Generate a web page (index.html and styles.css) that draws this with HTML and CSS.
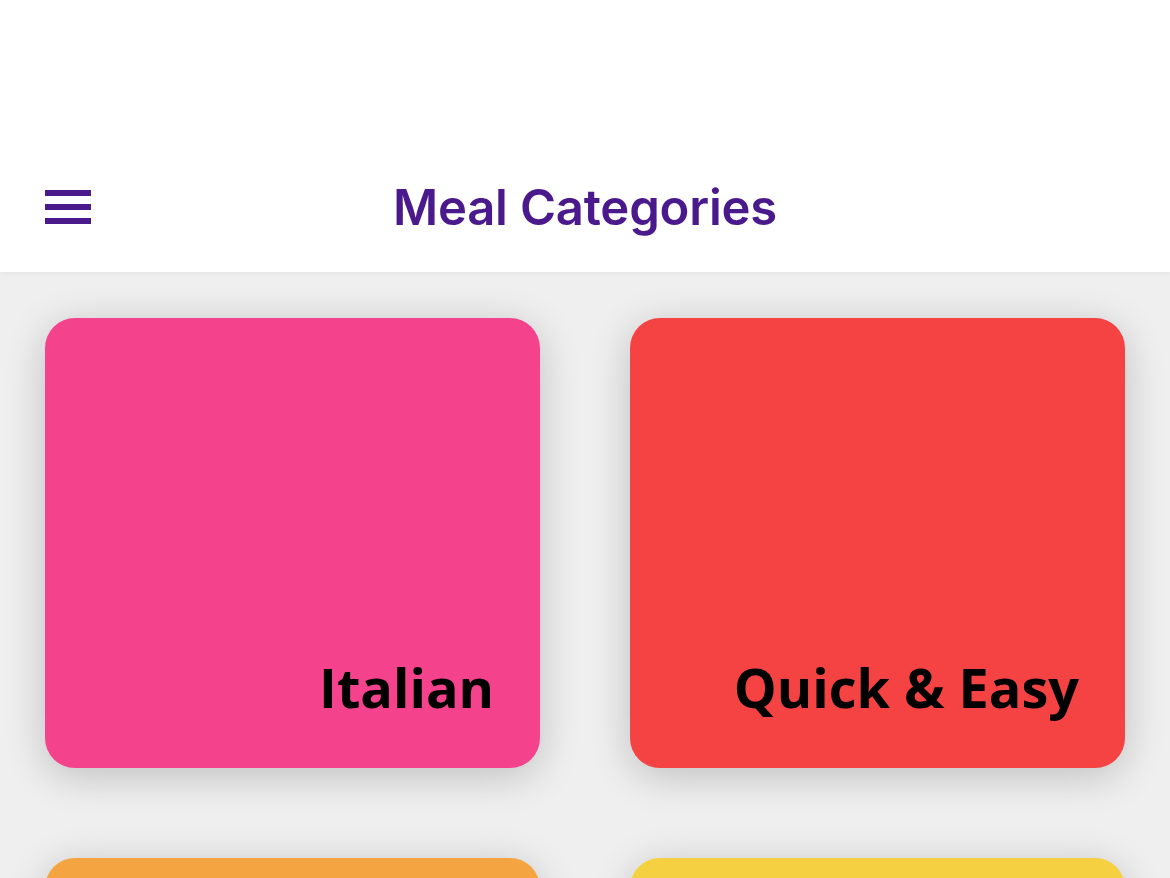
FILE: index.html
```html
<!DOCTYPE html>
<html>
<head>
<meta charset="utf-8">
<link rel="stylesheet" href="styles.css">
</head>
<body>
<div class="status"></div>
<header class="header">
  <button class="menu" aria-label="menu">
    <svg width="46" height="36" viewBox="0 0 46 36"><rect x="0" y="0" width="46" height="6" fill="#4a1a8c"/><rect x="0" y="14" width="46" height="6" fill="#4a1a8c"/><rect x="0" y="28" width="46" height="6" fill="#4a1a8c"/></svg>
  </button>
  <h1 class="title">Meal Categories</h1>
</header>
<main class="grid">
  <div class="card pink"><span class="label">Italian</span></div>
  <div class="card red"><span class="label">Quick &amp; Easy</span></div>
  <div class="card orange"></div>
  <div class="card yellow"></div>
</main>
</body>
</html>
```
FILE: styles.css
```css
html, body {
  margin: 0;
  padding: 0;
  height: 100%;
  overflow: hidden;
  background: #efefef;
}
.status {
  height: 142px;
  background: #fff;
}
.header {
  height: 130px;
  background: #fff;
  position: relative;
  display: flex;
  align-items: flex-start;
  justify-content: center;
  box-shadow: 0 2px 4px rgba(0,0,0,0.04);
  z-index: 1;
}
.menu {
  position: absolute;
  left: 45px;
  top: 48px;
  padding: 0;
  border: 0;
  background: none;
  line-height: 0;
}
.title {
  margin: 0;
  margin-top: 36px;
  font-family: Inter, "Noto Sans", sans-serif;
  font-weight: 600;
  font-size: 49px;
  line-height: 60px;
  letter-spacing: -0.2px;
  color: #4a1a8c;
}
.grid {
  display: grid;
  grid-template-columns: 495px 495px;
  column-gap: 90px;
  row-gap: 90px;
  padding: 46px 45px 0 45px;
}
.card {
  height: 450px;
  border-radius: 30px;
  box-shadow: 0 8px 40px rgba(0,0,0,0.2);
  display: flex;
  align-items: flex-end;
  justify-content: flex-end;
  padding: 0 46px 51px 0;
  box-sizing: border-box;
}
.label {
  font-family: "Open Sans", sans-serif;
  font-weight: 700;
  font-size: 54px;
  line-height: 60px;
  color: #000;
}
.pink { background: #f5428d; }
.red { background: #f54242; }
.orange { background: #f5a442; }
.yellow { background: #f5d142; }
```
